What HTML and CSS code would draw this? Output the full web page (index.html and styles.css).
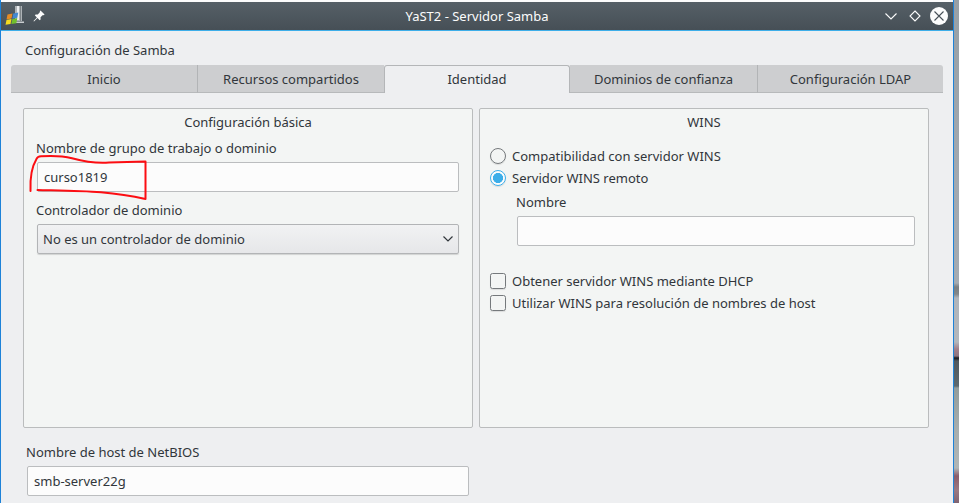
FILE: index.html
```
<!DOCTYPE html>
<html lang="es">
<head>
<meta charset="utf-8">
<title>YaST2 - Servidor Samba</title>
<link rel="stylesheet" href="styles.css">
</head>
<body>
<div class="screen">
  <div class="window">
    <header class="titlebar">
      <svg class="app-icon" width="20" height="20" viewBox="0 0 20 20">
        <path d="M10 0h7v15h-7z" fill="#aeb3b7"/>
        <path d="M12 0h2v14h-2z" fill="#eceef0"/>
        <path d="M15 0h1v15h-1z" fill="#7d8488"/>
        <path d="M11 15.500h8v1.500h-9z" fill="#c9cdd0"/>
        <path d="M2.500 8.500l5-1-1 5-5 1z" fill="#e58b25"/>
        <path d="M8.300 7.500l5-1-1 5.200-5 1z" fill="#4488d0"/>
        <path d="M1.500 14l5-1-1 5-5 .8z" fill="#f6dc20"/>
        <path d="M7.300 13l5-.8-1 5-5 .8z" fill="#72c02c"/>
      </svg>
      <svg class="pin" width="12" height="12" viewBox="0 0 12 12">
        <path d="M7.500.4L11.600 4.400 10.600 5.200 9.900 5 7.500 7.300 7.600 9.400 6.700 10.200 4.500 8 1 11.400.5 11 3.900 7.400 1.800 5.300 2.700 4.400 4.800 4.500 7 2.100 6.800 1.300z" fill="#fcfcfc"/>
      </svg>
      <h1 class="title">YaST2 - Servidor Samba</h1>
      <svg class="controls" width="64" height="20" viewBox="0 0 64 20" fill="none">
        <path d="M1.500 7.500L7 13l5.500-5.500" stroke="#fcfcfc" stroke-width="1.100"/>
        <path d="M31 5l5 5-5 5-5-5z" stroke="#fcfcfc" stroke-width="1.100"/>
        <circle cx="55" cy="10" r="9" fill="#fcfcfc"/>
        <path d="M50.500 5.500l9 9m0-9l-9 9" stroke="#475057" stroke-width="1.100"/>
      </svg>
    </header>
    <main class="content">
      <p class="heading">Configuración de Samba</p>
      <nav class="tabs">
        <span class="tab">Inicio</span>
        <span class="tab">Recursos compartidos</span>
        <span class="tab active">Identidad</span>
        <span class="tab">Dominios de confianza</span>
        <span class="tab">Configuración LDAP</span>
      </nav>
      <div class="groups">
        <section class="group">
          <h2 class="group-title">Configuración básica</h2>
          <div class="basic">
            <div class="label">Nombre de grupo de trabajo o dominio</div>
            <div class="field">curso1819
              <svg class="mark" width="124" height="52" viewBox="0 0 124 52">
                <path d="M4.500 37C4 25 5 14 10.500 5Q11.500 2.500 15 2.300C27 1.500 37 2 46 4.200C59 7.700 71 9.500 83 8.500L119.500 7.500V45C104 41.500 92 39.700 75 38.300C55 36.700 30 36.500 11.500 36" fill="none" stroke="#fc0d12" stroke-width="2" stroke-linecap="round" stroke-linejoin="round"/>
              </svg>
            </div>
            <div class="label label-combo">Controlador de dominio</div>
            <div class="field combo"><span>No es un controlador de dominio</span>
              <svg width="10" height="6" viewBox="0 0 10 6"><path d="M.5.500L5 5 9.500.500" fill="none" stroke="#31363b" stroke-width="1.200"/></svg>
            </div>
          </div>
        </section>
        <section class="group">
          <h2 class="group-title">WINS</h2>
          <div class="wins">
            <div class="option"><i class="radio"></i>Compatibilidad con servidor WINS</div>
            <div class="option"><i class="radio checked"></i>Servidor WINS remoto</div>
            <div class="remote">
              <div class="label">Nombre</div>
              <div class="field"></div>
            </div>
            <div class="option"><i class="check"></i>Obtener servidor WINS mediante DHCP</div>
            <div class="option"><i class="check"></i>Utilizar WINS para resolución de nombres de host</div>
          </div>
        </section>
      </div>
      <div class="netbios">
        <div class="label">Nombre de host de NetBIOS</div>
        <div class="field">smb-server22g</div>
      </div>
    </main>
  </div>
  <div class="backdrop"></div>
</div>
</body>
</html>
```
FILE: styles.css
```
* { box-sizing: border-box; }
body {
  margin: 0;
  background: #fcfcfc;
  color: #31363b;
  font: 13px/18px "Noto Sans", sans-serif;
  overflow: hidden;
}
.screen { display: flex; height: 503px; }
.window {
  width: 954px;
  padding-top: 2px;
  border: solid #1d82d8;
  border-width: 0 1px;
  background: linear-gradient(#fcfcfc 2px, #eeeff1 2px);
}
.titlebar {
  display: flex;
  align-items: center;
  height: 29px;
  padding: 0 5px 1px 4px;
  border-bottom: 1px solid #3daee9;
  background: linear-gradient(#566067, #464f56);
  color: #fcfcfc;
}
.app-icon { margin-top: 1px; }
.pin { margin-left: 8px; }
.title {
  flex: 1;
  margin: 0 0 0 25px;
  font-size: 13px;
  font-weight: 400;
  text-align: center;
}
.content { padding: 10px 10px 0; }
.heading { margin: 0 0 6px 14px; }
.tabs { display: grid; grid-template-columns: 187px 186px 186px 187px 186px; height: 28px; }
.tab {
  display: flex;
  align-items: center;
  justify-content: center;
  background: #cdced0;
  border-bottom: 1px solid #b7b9bb;
}
.tab:first-child { border-right: 1px solid #b2b4b6; border-top-left-radius: 3px; }
.tab:last-child { border-left: 1px solid #b2b4b6; border-top-right-radius: 3px; }
.tab.active {
  padding-bottom: 2px;
  background: #eeeff1;
  border: 1px solid #b4b6b8;
  border-bottom: 0;
  border-radius: 3px 3px 0 0;
}
.groups { display: flex; gap: 6px; margin: 15px 14px 0 12px; }
.group {
  width: 450px;
  height: 320px;
  padding-top: 4px;
  border: 1px solid #babcbd;
  border-radius: 2px;
  background: #f3f5f4;
}
.group-title { margin: 0; font-size: 13px; font-weight: 400; text-align: center; }
.label { height: 18px; }
.field {
  display: flex;
  align-items: center;
  height: 30px;
  padding: 0 6px;
  border: 1px solid #bbbdbf;
  border-radius: 2px;
  background: #fcfcfc;
}
.basic { padding: 8px 13px 0 13px; }
.basic .label { margin: 0 0 5px -1px; }
.basic .field { position: relative; }
.basic .label-combo { margin-top: 9px; }
.mark { position: absolute; left: -12px; top: -9px; }
.combo {
  justify-content: space-between;
  padding: 0 5px;
  border-color: #b2b4b6;
  background: linear-gradient(#f1f2f3, #e6e7e9);
  box-shadow: 0 1px 1px rgba(0, 0, 0, .14);
}
.wins { padding: 14px 13px 0 10px; }
.option { display: flex; align-items: center; gap: 6px; height: 22px; }
.radio, .check { width: 16px; height: 16px; border: 1px solid #75797c; }
.radio { border-radius: 50%; box-shadow: 0 1px 1px rgba(0, 0, 0, .1); }
.radio.checked {
  border-color: #3daee9;
  background: radial-gradient(circle, #3daee9 4.800px, #fcfcfc 5.300px);
}
.check { border-radius: 2.500px; box-shadow: 0 1px 1px rgba(0, 0, 0, .1); }
.remote { padding: 4px 0 24px 27px; }
.remote .label { margin: 0 0 5px -1px; }
.netbios { width: 442px; margin: 15px 0 0 16px; }
.netbios .label { margin: 0 0 5px -1px; }
.backdrop {
  flex: 1;
  background: linear-gradient(#98a0a6, #a2a9b0 180px, #a4abb2 283px, #7a7f82 287px, #82878a 294px, #b0b5bb 298px, #b3b7bc 342px, #a17f8a 349px, #8b7480 356px, #17181c 358px, #50585e 361px, #5d696e 386px, #939d9c 388px, #a7aeae 430px, #b0b6b6 468px, #8b5c6a 476px, #9a7983 490px, #7f6472 503px);
}
```
